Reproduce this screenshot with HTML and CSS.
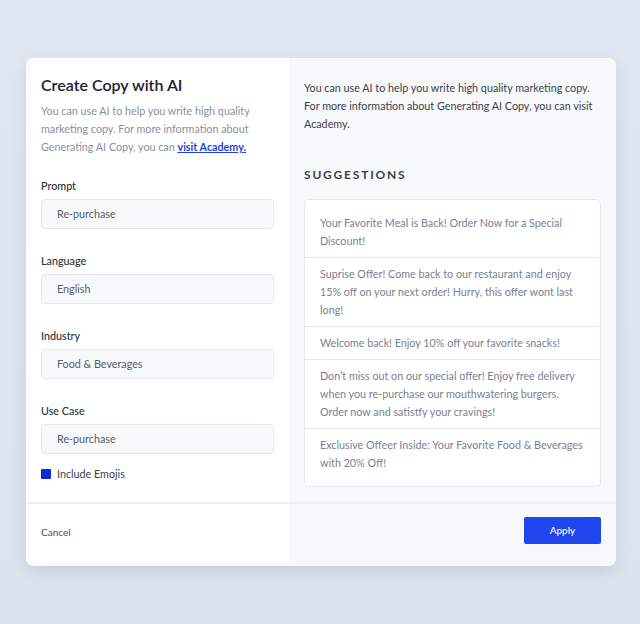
FILE: index.html
```html
<!DOCTYPE html>
<html lang="en">
<head>
<meta charset="utf-8">
<title>Create Copy with AI</title>
<link rel="stylesheet" href="styles.css">
</head>
<body>
<div class="card">
  <section class="pane pane-left">
    <h1 class="title">Create Copy with AI</h1>
    <p class="desc">You can use AI to help you write high quality marketing copy. For more information about Generating AI Copy, you can <a href="#" class="link">visit Academy.</a></p>
    <div class="fields">
      <div class="field">
        <label class="label">Prompt</label>
        <div class="input">Re-purchase</div>
      </div>
      <div class="field">
        <label class="label">Language</label>
        <div class="input">English</div>
      </div>
      <div class="field">
        <label class="label">Industry</label>
        <div class="input">Food &amp; Beverages</div>
      </div>
      <div class="field">
        <label class="label">Use Case</label>
        <div class="input">Re-purchase</div>
      </div>
    </div>
    <div class="check"><span class="box"></span><span>Include Emojis</span></div>
  </section>
  <section class="pane pane-right">
    <p class="info">You can use AI to help you write high quality marketing copy. For more information about Generating AI Copy, you can visit Academy.</p>
    <h2 class="heading">SUGGESTIONS</h2>
    <ul class="list">
      <li class="item">Your Favorite Meal is Back! Order Now for a Special Discount!</li>
      <li class="item">Suprise Offer! Come back to our restaurant and enjoy 15% off on your next order! Hurry, this offer wont last long!</li>
      <li class="item">Welcome back! Enjoy 10% off your favorite snacks!</li>
      <li class="item">Don’t miss out on our special offer! Enjoy free delivery when you re-purchase our mouthwatering burgers. Order now and satistfy your cravings!</li>
      <li class="item">Exclusive Offeer Inside: Your Favorite Food &amp; Beverages with 20% Off!</li>
    </ul>
  </section>
  <footer class="foot foot-left"><a href="#" class="cancel">Cancel</a></footer>
  <footer class="foot foot-right"><button class="apply">Apply</button></footer>
</div>
</body>
</html>
```
FILE: styles.css
```css
* { box-sizing: border-box; }
html, body { margin: 0; padding: 0; }
body {
  width: 640px;
  height: 624px;
  background: linear-gradient(180deg, #e1e7f2 0%, #dde3ee 100%);
  font-family: "Lato", "Inter", sans-serif;
  padding: 58px 24px 0 26px;
}
.card {
  width: 590px;
  height: 508px;
  display: grid;
  grid-template-columns: 263px 327px;
  grid-template-rows: 444px 64px;
  border-radius: 8px;
  overflow: hidden;
  background: #f7f8fa;
  box-shadow: 0 6px 16px rgba(90, 110, 150, 0.18);
}
.pane { padding: 17px 15px 0 15px; }
.pane-left { background: #fff; }
.pane-right { background: #f7f8fa; padding-top: 21px; }
.title {
  margin: 0;
  font-size: 16px;
  line-height: 20px;
  font-weight: 600;
  color: #1b2030;
}
.desc {
  margin: 7px 0 0;
  font-size: 10.75px;
  line-height: 18px;
  color: #8a8fa0;
}
.link {
  color: #1f3fe0;
  font-weight: 700;
  text-decoration: underline;
}
.fields {
  margin-top: 23px;
  display: flex;
  flex-direction: column;
  gap: 25px;
}
.field { display: flex; flex-direction: column; gap: 6px; }
.label {
  font-size: 10.75px;
  line-height: 14px;
  color: #2b303c;
  font-weight: 500;
}
.input {
  height: 30px;
  border: 1px solid #e7e9ee;
  background: #f7f8fa;
  border-radius: 4px;
  padding: 0 15px;
  font-size: 10.75px;
  line-height: 28px;
  color: #565b6a;
}
.check {
  margin-top: 13px;
  display: flex;
  align-items: center;
  gap: 6px;
  font-size: 10.75px;
  line-height: 14px;
  color: #3a3f4c;
}
.box {
  width: 10px;
  height: 10px;
  background: #0b2bd3;
  border-radius: 1px;
}
.info {
  margin: 0;
  font-size: 10.75px;
  line-height: 18px;
  color: #3a3f4e;
}
.heading {
  margin: 34px 0 0;
  font-size: 12px;
  line-height: 16px;
  font-weight: 700;
  letter-spacing: 1.8px;
  color: #3a3f4e;
}
.list {
  list-style: none;
  margin: 16px 0 0;
  padding: 7px 0;
  width: 297px;
  background: #fff;
  border: 1px solid #e5e7ec;
  border-radius: 5px;
}
.item {
  padding: 7px 15px 7px;
  font-size: 10.75px;
  line-height: 18px;
  color: #7b8093;
  border-bottom: 1px solid #e5e7ec;
}
.item:last-child { border-bottom: none; }
.foot {
  border-top: 2px solid #eef0f4;
  display: flex;
  align-items: center;
}
.foot-left { background: #fff; padding: 0 15px; box-shadow: inset 0 -4px 4px -2px rgba(0,0,0,0.04); }
.foot-right { background: #f7f8fa; justify-content: flex-end; padding: 0 15px 10px; }
.cancel {
  font-size: 10px;
  color: #4a4f5e;
  text-decoration: none;
  padding-bottom: 6px;
}
.apply {
  width: 77px;
  height: 27px;
  border: none;
  border-radius: 2px;
  background: #2146ee;
  color: #fff;
  font-family: inherit;
  font-size: 10px;
  font-weight: 500;
}
```
